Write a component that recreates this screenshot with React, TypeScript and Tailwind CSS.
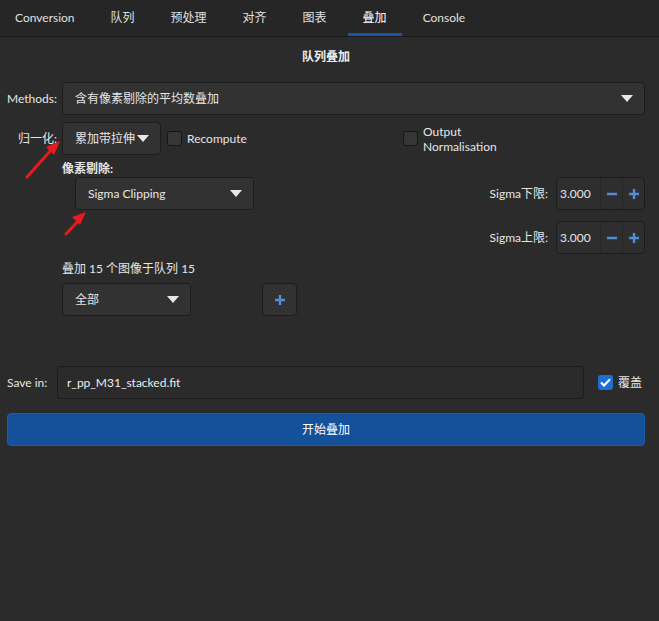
import React from 'react';

const tabs = ['Conversion', '队列', '预处理', '对齐', '图表', '叠加', 'Console'];

const Caret = () => (
  <svg width="12" height="7" viewBox="0 0 12 7" className="shrink-0">
    <path d="M0 0 H12 L6 7 Z" fill="#e8e8e8" />
  </svg>
);

const Dropdown = ({ label, className = '' }: { label: string; className?: string }) => (
  <div
    className={`flex items-center justify-between h-[33px] pl-[12px] pr-[11px] bg-[#323232] border border-[#1c1c1c] rounded-[4px] text-[#e6e6e6] ${className}`}
  >
    <span>{label}</span>
    <Caret />
  </div>
);

const Check = ({ checked = false }: { checked?: boolean }) =>
  checked ? (
    <div className="w-[15px] h-[15px] rounded-[3px] bg-[#1e6fd0] flex items-center justify-center shrink-0">
      <svg width="11" height="9" viewBox="0 0 11 9">
        <path d="M1 4.5 L4 7.5 L10 1.2" stroke="#fff" strokeWidth="2.2" fill="none" />
      </svg>
    </div>
  ) : (
    <div className="w-[15px] h-[15px] rounded-[3px] bg-[#363636] border border-[#161616] shrink-0" />
  );

const Plus = () => (
  <svg width="12" height="12" viewBox="0 0 12 12">
    <path d="M6 1 V11 M1 6 H11" stroke="#4f8fd8" strokeWidth="2.4" />
  </svg>
);

const Minus = () => (
  <svg width="12" height="12" viewBox="0 0 12 12">
    <path d="M1 6 H11" stroke="#4f8fd8" strokeWidth="2.4" />
  </svg>
);

const Spin = ({ label }: { label: string }) => (
  <div className="flex items-center justify-end">
    <span className="mr-[8px] text-[#e6e6e6]">{label}</span>
    <div className="flex items-stretch h-[33px] w-[89px] bg-[#2e2e2e] border border-[#1c1c1c] rounded-[4px]">
      <div className="flex-1 flex items-center pl-[3px] text-[#e6e6e6]">3.000</div>
      <div className="w-[22px] flex items-center justify-center border-l border-[#262626]">
        <Minus />
      </div>
      <div className="w-[22px] flex items-center justify-center border-l border-[#262626]">
        <Plus />
      </div>
    </div>
  </div>
);

export default function App() {
  return (
    <div
      className="relative w-[659px] h-[621px] bg-[#2b2b2b] text-[12px] text-[#e6e6e6] overflow-hidden"
      style={{ fontFamily: '"Lato", "Noto Sans CJK SC", sans-serif' }}
    >
      {/* Tabs */}
      <div className="flex gap-[6px] h-[37px] bg-[#262626] border-b border-[#1a1a1a]">
        {tabs.map(t => (
          <div
            key={t}
            className={`relative flex items-center px-[15px] ${t === '叠加' ? 'text-white' : 'text-[#e0e0e0]'}`}
          >
            {t}
            {t === '叠加' && <div className="absolute left-0 right-0 bottom-0 h-[3px] bg-[#1a56a3]" />}
          </div>
        ))}
      </div>

      <div className="flex flex-col pl-[7px] pr-[14px]">
        {/* Title */}
        <div className="h-[16px] mt-[12px] flex items-center justify-center font-bold text-[#eeeeee]">
          队列叠加
        </div>

        {/* Methods */}
        <div className="flex items-center mt-[17px]">
          <span className="w-[55px]">Methods:</span>
          <Dropdown label="含有像素剔除的平均数叠加" className="flex-1" />
        </div>

        {/* Normalisation */}
        <div className="flex items-center mt-[7px]">
          <span className="w-[50px] text-right mr-[5px]">归一化:</span>
          <Dropdown label="累加带拉伸" className="w-[99px] h-[32px] pl-[10px] pr-[8px]" />
          <div className="flex items-center w-[236px] ml-[6px]">
            <Check />
            <span className="ml-[5px]">Recompute</span>
          </div>
          <div className="flex items-center">
            <Check />
            <span className="ml-[5px] leading-[15px]">
              Output
              <br />
              Normalisation
            </span>
          </div>
        </div>

        {/* Pixel rejection + sigma */}
        <div className="flex mt-[6px]">
          <div className="flex flex-col pl-[55px]">
            <span className="h-[16px] leading-[16px] font-bold">像素剔除:</span>
            <Dropdown label="Sigma Clipping" className="ml-[13px] w-[179px] h-[32px] pl-[11px]" />
          </div>
          <div className="flex flex-col ml-auto mt-[16px] gap-[11px]">
            <Spin label="Sigma下限:" />
            <Spin label="Sigma上限:" />
          </div>
        </div>

        {/* Stack count */}
        <div className="pl-[55px] mt-[7px] h-[16px] leading-[16px]">叠加 15 个图像于队列 15</div>
        <div className="flex items-center pl-[55px] mt-[6px]">
          <Dropdown label="全部" className="w-[129px] h-[33px] pl-[11px]" />
          <div className="ml-[71px] w-[35px] h-[33px] flex items-center justify-center bg-[#323232] border border-[#1c1c1c] rounded-[4px]">
            <Plus />
          </div>
        </div>

        {/* Save in */}
        <div className="flex items-center mt-[50px]">
          <span className="w-[50px]">Save in:</span>
          <div className="flex items-center w-[527px] h-[33px] pl-[9px] bg-[#2b2b2b] border border-[#1c1c1c] rounded-[4px] text-[#eeeeee]">
            r_pp_M31_stacked.fit
          </div>
          <div className="flex items-center ml-[14px]">
            <Check checked />
            <span className="ml-[5px]">覆盖</span>
          </div>
        </div>

        {/* Start */}
        <div className="mt-[14px] h-[33px] flex items-center justify-center bg-[#15509b] border border-[#1a5cae] rounded-[4px] text-white">
          开始叠加
        </div>
      </div>

      {/* Annotation arrows */}
      <svg className="absolute left-0 top-0 pointer-events-none" width="659" height="621">
        <path d="M27 177 L52 149" stroke="#e8191f" strokeWidth="3" strokeLinecap="round" />
        <path d="M60 141 L46 147 L54 155 Z" fill="#e8191f" />
        <path d="M66 234 L80 219" stroke="#e8191f" strokeWidth="3" strokeLinecap="round" />
        <path d="M86 212 L72 217 L80 225 Z" fill="#e8191f" />
      </svg>
    </div>
  );
}
